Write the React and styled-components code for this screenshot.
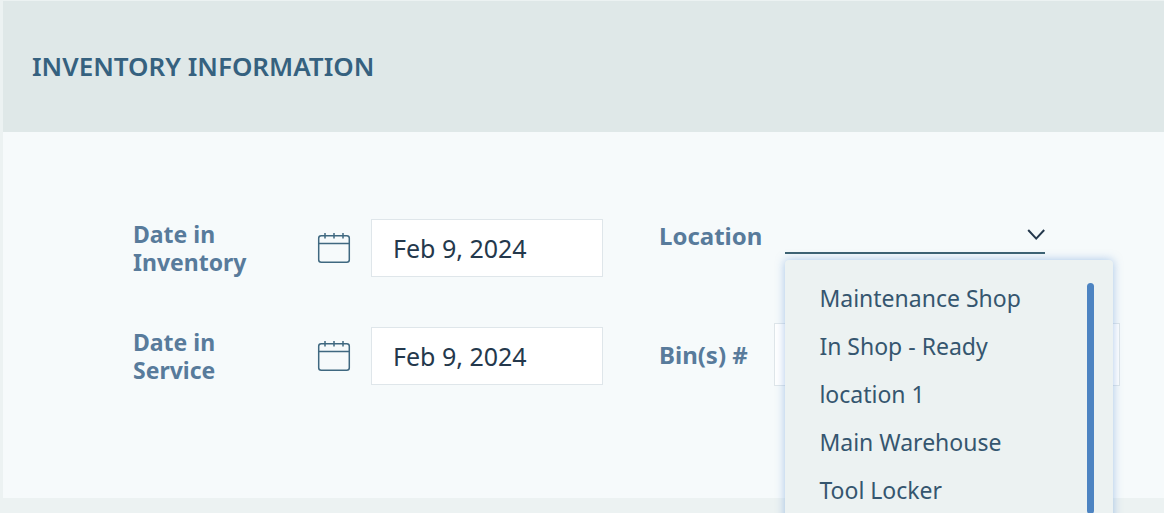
import styled, { createGlobalStyle } from 'styled-components'
import { useState } from 'react';

const locations = [
  'Maintenance Shop',
  'In Shop - Ready',
  'location 1',
  'Main Warehouse',
  'Tool Locker',
];

function CalendarIcon() {
  return (
    <svg width="34" height="34" viewBox="0 0 34 34" fill="none" stroke="#3f6880" strokeWidth="1.5" aria-hidden="true">
      <rect x="1.7" y="4.7" width="30.6" height="26.6" rx="2.5" />
      <path d="M1.7 12.5H32.3M8 2V7.5M17 2V7.5M26 2V7.5" />
    </svg>
  );
}

function DateField({ id, label, value, onChange }) {
  return (
    <DateRow>
      <DateLabel htmlFor={id}>{label}</DateLabel>
      <CalendarButton type="button" aria-label={`Pick ${label}`}>
        <CalendarIcon />
      </CalendarButton>
      <DateInput id={id} type="text" value={value} onChange={(e) => onChange(e.target.value)} />
    </DateRow>
  );
}

function App() {

  const [inventoryDate, setInventoryDate] = useState('Feb 9, 2024');
  const [serviceDate, setServiceDate] = useState('Feb 9, 2024');
  const [location, setLocation] = useState('');
  const [bins, setBins] = useState('');
  const [isOpen, setIsOpen] = useState(true);

  const toggleMenu = (e) => {
    e.preventDefault();
    setIsOpen(!isOpen);
  };

  const pick = (name) => {
    setLocation(name);
    setIsOpen(false);
  };

  return (
    <Page>
      <GlobalStyle />
      <Panel>
        <Header>
          <Title>INVENTORY INFORMATION</Title>
        </Header>
        <Form>
          <DateColumn>
            <DateField id="inventory-date" label="Date in Inventory" value={inventoryDate} onChange={setInventoryDate} />
            <DateField id="service-date" label="Date in Service" value={serviceDate} onChange={setServiceDate} />
          </DateColumn>
          <PlaceColumn>
            <LocationRow>
              <Label htmlFor="location">Location</Label>
              <SelectWrap>
                <Select id="location" value={location} onMouseDown={toggleMenu} onChange={(e) => pick(e.target.value)}>
                  <option value=""></option>
                  {locations.map((name) => (
                    <option key={name} value={name}>{name}</option>
                  ))}
                </Select>
                <Chevron width="18" height="12" viewBox="0 0 18 12" aria-hidden="true">
                  <path d="M1.2 1L9.2 9.6L17.2 1" />
                </Chevron>
                {isOpen && (
                  <Menu>
                    <MenuList>
                      {locations.map((name) => (
                        <li key={name}>
                          <MenuItem type="button" onClick={() => pick(name)}>{name}</MenuItem>
                        </li>
                      ))}
                    </MenuList>
                    <ScrollThumb />
                  </Menu>
                )}
              </SelectWrap>
            </LocationRow>
            <BinsRow>
              <Label htmlFor="bins">Bin(s) #</Label>
              <BinsInput id="bins" type="text" value={bins} onChange={(e) => setBins(e.target.value)} />
            </BinsRow>
          </PlaceColumn>
        </Form>
      </Panel>
    </Page>
  );
}

const GlobalStyle = createGlobalStyle`
* {
  box-sizing: border-box;
}
body {
  margin: 0;
  background-color: #ecf2f2;
  font-family: "Noto Sans", sans-serif;
}
button, input, select {
  font-family: inherit;
}
`

const Page = styled.div`
min-height: 100vh;
padding: 1px 0 15px 3px;
overflow: hidden;
`

const Panel = styled.section`
background-color: #f6fafb;
`

const Header = styled.header`
padding: 48px 29px;
background-color: #dfe8e8;
`

const Title = styled.h2`
margin: 0;
font-size: 26px;
font-weight: 600;
line-height: 35px;
color: #35617f;
`

const Form = styled.form`
display: grid;
grid-template-columns: 470px minmax(0, 1fr);
column-gap: 56px;
padding: 87px 44px 112px 130px;
`

const DateColumn = styled.div`
display: flex;
flex-direction: column;
gap: 50px;
`

const DateRow = styled.div`
display: flex;
align-items: center;
`

const Label = styled.label`
font-size: 24px;
font-weight: 700;
line-height: 34px;
white-space: nowrap;
color: #587b9b;
`

const DateLabel = styled(Label)`
width: 120px;
margin-right: auto;
font-size: 23px;
line-height: 28px;
white-space: normal;
`

const CalendarButton = styled.button`
display: flex;
margin-right: 20px;
padding: 0;
border: none;
background: none;
cursor: pointer;
`

const Input = styled.input`
min-width: 0;
border: 1px solid #dfe6ea;
background-color: #fff;
color: #24384c;
font-size: 25px;
`

const DateInput = styled(Input)`
width: 232px;
height: 58px;
padding: 0 21px;
`

const PlaceColumn = styled.div`
display: flex;
flex-direction: column;
gap: 69px;
`

const LocationRow = styled.div`
display: flex;
align-items: flex-start;
gap: 23px;
padding-right: 75px;
`

const SelectWrap = styled.div`
position: relative;
flex: 1;
height: 35px;
`

const Select = styled.select`
width: 100%;
height: 100%;
padding: 0 30px 0 0;
border: none;
border-bottom: 2px solid #3d6271;
border-radius: 0;
background: transparent;
color: #35566f;
font-size: 23px;
appearance: none;
outline: none;
`

const Chevron = styled.svg`
position: absolute;
top: 10px;
right: 0;
pointer-events: none;
fill: none;
stroke: #24384c;
stroke-width: 2;
`

const Menu = styled.div`
position: absolute;
top: 41px;
left: 0;
z-index: 1;
display: flex;
width: 328px;
padding: 14px 19px 20px 34px;
border-radius: 4px;
background-color: #ecf2f2;
box-shadow: 0 0 10px rgba(90, 145, 215, 0.5);
`

const MenuList = styled.ul`
flex: 1;
margin: 0;
padding: 0;
list-style: none;
`

const MenuItem = styled.button`
display: block;
width: 100%;
padding: 0;
border: none;
background: none;
color: #35566f;
font-size: 23px;
line-height: 48px;
text-align: left;
cursor: pointer;
`

const ScrollThumb = styled.div`
width: 7px;
margin-top: 9px;
border-radius: 4px;
background-color: #4d84c2;
`

const BinsRow = styled.div`
display: flex;
align-items: center;
gap: 26px;
`

const BinsInput = styled(Input)`
flex: 1;
height: 63px;
padding: 0 21px;
`


export default App;
